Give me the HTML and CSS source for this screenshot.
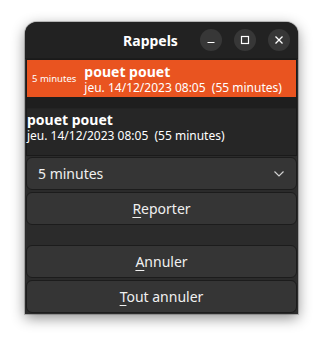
FILE: index.html
```html
<!DOCTYPE html>
<html lang="fr">
<head>
<meta charset="utf-8">
<title>Rappels</title>
<link rel="stylesheet" href="styles.css">
</head>
<body>
<div class="window">
  <header class="titlebar">
    <div class="title">Rappels</div>
    <div class="wm-buttons">
      <button class="wm-btn" aria-label="Réduire">
        <svg width="10" height="10" viewBox="0 0 10 10"><line x1="1.5" y1="7.5" x2="8.5" y2="7.5" stroke="#fff" stroke-width="1.2"/></svg>
      </button>
      <button class="wm-btn" aria-label="Agrandir">
        <svg width="10" height="10" viewBox="0 0 10 10"><rect x="1.5" y="1.5" width="7" height="7" fill="none" stroke="#fff" stroke-width="1.2"/></svg>
      </button>
      <button class="wm-btn" aria-label="Fermer">
        <svg width="10" height="10" viewBox="0 0 10 10"><path d="M1.5 1.5 L8.5 8.5 M8.5 1.5 L1.5 8.5" stroke="#fff" stroke-width="1.3"/></svg>
      </button>
    </div>
  </header>
  <main class="content">
    <div class="list">
      <div class="row selected">
        <div class="delay">5 minutes</div>
        <div class="info">
          <div class="name">pouet pouet</div>
          <div class="date">jeu. 14/12/2023 08:05&nbsp;&nbsp;(55 minutes)</div>
        </div>
      </div>
      <div class="row plain">
        <div class="info">
          <div class="name">pouet pouet</div>
          <div class="date">jeu. 14/12/2023 08:05&nbsp;&nbsp;(55 minutes)</div>
        </div>
      </div>
    </div>
    <div class="combo">
      <span>5 minutes</span>
      <svg width="12" height="8" viewBox="0 0 12 8"><polyline points="1.5,1.5 6,6 10.5,1.5" fill="none" stroke="#d0d0d0" stroke-width="1.2"/></svg>
    </div>
    <button class="btn"><u>R</u>eporter</button>
    <div class="spacer"></div>
    <button class="btn"><u>A</u>nnuler</button>
    <button class="btn"><u>T</u>out annuler</button>
  </main>
</div>
</body>
</html>
```
FILE: styles.css
```css
html, body {
  margin: 0;
  background: #ffffff;
}
body {
  padding: 22px 0 29px 25px;
  font-family: "Noto Sans", "DejaVu Sans", sans-serif;
  color: #ffffff;
}
.window {
  width: 273px;
  height: 292px;
  background: #2b2b2b;
  border-radius: 12px 12px 0 0;
  box-shadow: 0 4px 14px rgba(0, 0, 0, 0.45), 0 0 0 1px rgba(0, 0, 0, 0.2);
  display: flex;
  flex-direction: column;
  overflow: hidden;
}
.titlebar {
  height: 36px;
  flex: none;
  background: #222222;
  display: flex;
  align-items: center;
  border-bottom: 1px solid #1c1c1c;
}
.title {
  flex: 1;
  padding-left: 76px;
  text-align: center;
  font-weight: bold;
  font-size: 14px;
}
.wm-buttons {
  display: flex;
  gap: 12px;
  padding-right: 8px;
}
.wm-btn {
  width: 22px;
  height: 22px;
  border-radius: 50%;
  border: none;
  padding: 0;
  background: #373737;
  display: flex;
  align-items: center;
  justify-content: center;
}
.content {
  flex: 1;
  padding: 0 1px 1px 1px;
  display: flex;
  flex-direction: column;
}
.list {
  flex: none;
  border: 1px solid #1a1a1a;
  background: #1e1e1e;
  height: 95px;
  display: flex;
  flex-direction: column;
  gap: 11px;
}
.row {
  display: flex;
  align-items: center;
}
.row.selected {
  background: #e95420;
  height: 37px;
  padding-left: 5px;
  gap: 8px;
}
.row.plain {
  flex: 1;
  background: #262626;
  border-top: 1px solid #232323;
  align-items: flex-start;
  padding-top: 2px;
}
.delay {
  font-size: 9.5px;
  white-space: nowrap;
}
.name {
  font-weight: bold;
  font-size: 14px;
  line-height: 17px;
}
.date {
  font-size: 12px;
  line-height: 15px;
}
.combo {
  flex: none;
  margin-top: 1px;
  height: 33px;
  box-sizing: border-box;
  background: #353535;
  border: 1px solid #1c1c1c;
  border-radius: 6px;
  display: flex;
  align-items: center;
  justify-content: space-between;
  padding: 0 11px 0 11px;
  font-size: 14px;
  color: #f0f0f0;
}
.btn {
  flex: none;
  margin-top: 2px;
  height: 33px;
  box-sizing: border-box;
  background: #353535;
  border: 1px solid #1c1c1c;
  border-radius: 6px;
  font-family: inherit;
  font-size: 14px;
  color: #f0f0f0;
  padding: 0;
}
.btn u {
  text-underline-offset: 3px;
  text-decoration-thickness: 1px;
}
.spacer {
  flex: none;
  height: 18px;
}
```
